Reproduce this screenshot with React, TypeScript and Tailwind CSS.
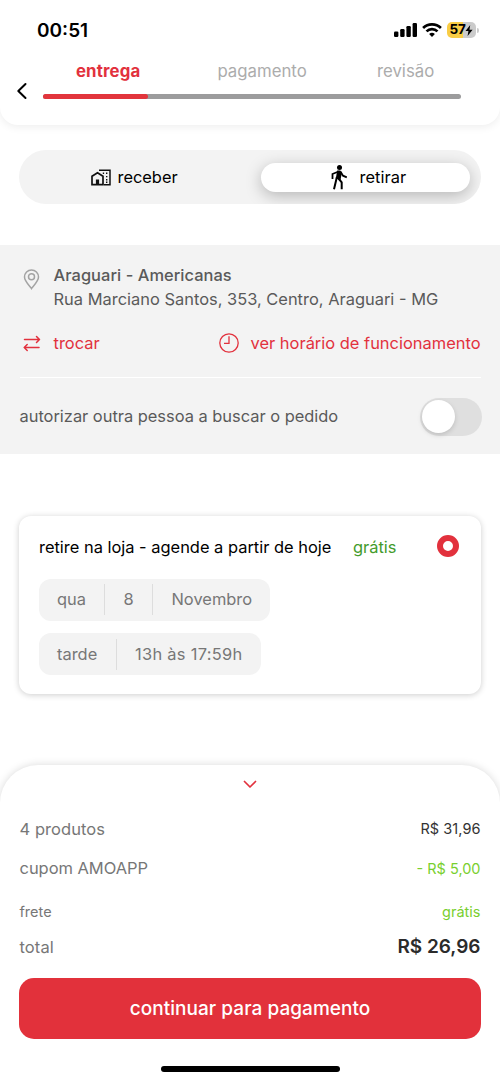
function StatusBar() {
  return (
    <div className="flex h-14 items-center justify-between pt-1 pr-[21px] pl-[37px]">
      <span className="pt-0.5 text-[19px] font-semibold text-black">00:51</span>
      <div className="flex items-center">
        <svg width="23" height="14" viewBox="0 0 23 14" fill="#000">
          <rect x="0" y="8.5" width="4.4" height="5.5" rx="1.2" />
          <rect x="6.2" y="6" width="4.4" height="8" rx="1.2" />
          <rect x="12.4" y="3" width="4.4" height="11" rx="1.2" />
          <rect x="18.6" y="0" width="4.4" height="14" rx="1.2" />
        </svg>
        <svg className="ml-[5px]" width="20" height="14" viewBox="0 0 20 14" fill="none" stroke="#000" strokeWidth="2.7">
          <path d="M1.1 5A12.7 12.7 0 0 1 18.9 5" />
          <path d="M4.5 8.4A7.9 7.9 0 0 1 15.5 8.4" />
          <path d="M10 14 7.1 11.1A4.2 4.2 0 0 1 12.9 11.1Z" fill="#000" stroke="none" />
        </svg>
        <div className="ml-[5px] flex h-4 w-[29px] items-center justify-center rounded-[5px] bg-[linear-gradient(90deg,#f9cd45_56%,#cbcbcb_56%)]">
          <span className="text-[13.5px] leading-none font-bold tracking-[-0.3px] text-black">57</span>
          <svg width="8" height="11" viewBox="0 0 8 11" fill="#000">
            <path d="M5.2 0 .5 6h2.9L2.6 11l5-6.3H4.5Z" />
          </svg>
        </div>
        <div className="ml-px h-[5px] w-[2px] rounded-r-full bg-[#cbcbcb]" />
      </div>
    </div>
  );
}

function Steps() {
  return (
    <div className="flex h-[68px] pt-[3px] pl-4">
      <svg className="mt-[23px]" width="12" height="18" viewBox="0 0 12 18" fill="none" stroke="#000" strokeWidth="2" strokeLinecap="round" strokeLinejoin="round">
        <path d="M9.5 2 2.3 9l7.2 7" />
      </svg>
      <div className="ml-[15.4px] w-[418px]">
        <div className="flex h-[26px] items-center text-[16.8px] text-[#acacac]">
          <span className="ml-[32.5px] w-[141.5px] font-bold tracking-[0.15px] text-[#e2313d]">entrega</span>
          <span className="w-[159.5px]">pagamento</span>
          <span>revisão</span>
        </div>
        <div className="mt-[9px] h-[5px] rounded-full bg-[#9c9c9d]">
          <div className="h-full w-[105px] rounded-full bg-[#e2353c]" />
        </div>
      </div>
    </div>
  );
}

function HomeIcon() {
  return (
    <svg width="20" height="17" viewBox="0 0 20 17" fill="none" stroke="#111">
      <path d="M1 15.7V7.300L6.500 3.700l5.500 3.600v8.400Z" strokeWidth="1.700" />
      <path d="M8 1.200h11v14.500h-6" strokeWidth="1.500" />
      <path d="M4.900 16V10.500h3.200V16Z" fill="#111" stroke="none" />
      <path d="M11.800 4.300h1.300M15 4.300h1.400M15 7.600h1.400M15 10.700h1.400M15 13.300h1.400" strokeWidth="1.400" />
    </svg>
  );
}

function WalkIcon() {
  return (
    <svg width="17" height="25" viewBox="0 0 17 25" fill="none" stroke="#000" strokeWidth="1.800">
      <circle cx="8.500" cy="2.500" r="2.500" fill="#000" stroke="none" />
      <path d="M6.200 5.500h3l1.800 1.800-1.500 7.700-4.700-1.500Z" fill="#000" stroke="none" />
      <path d="M7.500 6.500 1.500 9v5M9.700 7l2.300 3.700 3.800 1.600" />
      <path d="M5.900 12 3 24.300M7.500 13.500l3.200 3.800v7" strokeWidth="2" />
    </svg>
  );
}

function DeliveryTabs() {
  return (
    <div className="mx-[19px] mt-[25px] flex h-[54px] items-center overflow-hidden rounded-full bg-[#f3f3f3] text-[16.4px] text-black">
      <button className="flex h-full w-[242px] items-center pl-[71.5px]">
        <HomeIcon />
        <span className="ml-[7px]">receber</span>
      </button>
      <button className="flex h-[29px] w-[209px] items-center rounded-full bg-white pl-[70px] shadow-[0_4px_16px_rgba(0,0,0,0.25)]">
        <WalkIcon />
        <span className="ml-[11.5px] tracking-[0.05px]">retirar</span>
      </button>
    </div>
  );
}

function Store() {
  return (
    <section className="mt-[41px] h-[209px] bg-[#f3f3f3] px-[19.5px] pt-[18px] text-[16.45px] text-[#5a5a5a]">
      <div className="flex">
        <svg className="mt-[6px] ml-[3.5px]" width="17" height="21" viewBox="0 0 17 21" fill="none" stroke="#a3a3a3" strokeWidth="1.5">
          <path d="M8.5 19.5C7.5 17.6 1.5 12.5 1.5 8a7 7 0 0 1 14 0c0 4.500-6 9.600-7 11.500Z" />
          <circle cx="8.500" cy="7.700" r="3" />
        </svg>
        <div className="ml-[13.5px] leading-6">
          <p className="font-medium tracking-[0.04px]">Araguari - Americanas</p>
          <p>Rua Marciano Santos, 353, Centro, Araguari - MG</p>
        </div>
      </div>
      <div className="mt-5 flex h-6 items-center text-[#e2313d]">
        <svg className="ml-[3px]" width="18" height="17" viewBox="0 0 18 17" fill="none" stroke="#e2313d" strokeWidth="1.5" strokeLinecap="round" strokeLinejoin="round">
          <path d="M1.500 4.500h15M13.500 1.500l3 3-3 3M16 12.500H1.200M4.200 9.500l-3 3 3 3" />
        </svg>
        <span className="ml-[13px]">trocar</span>
        <svg className="ml-auto" width="20" height="20" viewBox="0 0 20 20" fill="none" stroke="#e2313d" strokeWidth="1.300">
          <circle cx="10" cy="10" r="9.200" />
          <path d="M10 3.300v7H5" />
        </svg>
        <span className="ml-[12px]">ver horário de funcionamento</span>
      </div>
      <div className="mt-[22px] h-px bg-white" />
      <div className="-mr-[1.5px] flex h-[77px] items-center justify-between">
        <span className="tracking-[-0.02px]">autorizar outra pessoa a buscar o pedido</span>
        <div className="flex h-[38px] w-[62px] items-center rounded-full bg-[#dfdfdf] px-[2px]">
          <div className="h-[33px] w-[33px] rounded-full bg-white shadow-[0_2px_5px_rgba(0,0,0,0.15)]" />
        </div>
      </div>
    </section>
  );
}

function PickupCard() {
  return (
    <section className="mx-[19px] mt-[62px] h-[178px] rounded-[12px] bg-white px-5 pt-[18px] text-[16.43px] text-[#777] shadow-[0_1px_6px_rgba(0,0,0,0.2)]">
      <div className="flex h-[26px] items-center">
        <span className="w-[314px] text-black">retire na loja - agende a partir de hoje</span>
        <span className="text-[#439b2c]">grátis</span>
        <span className="mr-[2px] mb-[3px] ml-auto h-[22px] w-[22px] rounded-full border-[6px] border-[#e2313d]" />
      </div>
      <div className="mt-[18.5px] flex h-[42px] w-[231px] items-center rounded-[12px] bg-[#f3f3f3] pl-[18px]">
        <span className="w-[47px]">qua</span>
        <div className="h-[31px] w-px bg-[#ddd]" />
        <span className="w-[47px] text-center">8</span>
        <div className="h-[31px] w-px bg-[#ddd]" />
        <span className="ml-[18.5px]">Novembro</span>
      </div>
      <div className="mt-[12.5px] flex h-[42px] w-[222px] items-center rounded-[12px] bg-[#f3f3f3] pl-[18px]">
        <span className="w-[59px]">tarde</span>
        <div className="h-[31px] w-px bg-[#ddd]" />
        <span className="ml-[18px] tracking-[0.3px]">13h às 17:59h</span>
      </div>
    </section>
  );
}

function Summary() {
  return (
    <section className="mt-[71px] flex h-[317px] flex-col rounded-t-[38px] bg-white px-[19.5px] text-[16.5px] text-[#777] shadow-[0_0_8px_rgba(0,0,0,0.15)]">
      <svg className="mx-auto mt-[15px]" width="14" height="9" viewBox="0 0 14 9" fill="none" stroke="#e2313d" strokeWidth="1.700" strokeLinecap="round" strokeLinejoin="round">
        <path d="m1.500 1.500 5.500 5.500 5.500-5.500" />
      </svg>
      <div className="mt-[20px] flex h-10 items-center justify-between">
        <span className="tracking-[0.05px]">4 produtos</span>
        <span className="text-[14.500px] tracking-[0.05px] text-[#333]">R$ 31,96</span>
      </div>
      <div className="flex h-10 items-center justify-between">
        <span className="-mt-px tracking-[-0.05px]">cupom AMOAPP</span>
        <span className="text-[14.500px] text-[#79cf2f]">- R$ 5,00</span>
      </div>
      <div className="flex h-[45px] items-center justify-between text-[14.500px]">
        <span>frete</span>
        <span className="text-[#79cf2f]">grátis</span>
      </div>
      <div className="flex h-[27px] items-center justify-between">
        <span className="tracking-[0.1px]">total</span>
        <span className="pb-px text-[19px] font-semibold text-[#2b2b2b]">R$ 26,96</span>
      </div>
      <button className="-mx-[0.5px] mt-[17px] h-[60.5px] rounded-[15px] bg-[#e2313b] pt-px text-[19px] font-medium tracking-[0.05px] text-white">
        continuar para pagamento
      </button>
      <div className="mx-auto mt-[27.5px] h-[6px] w-[179px] rounded-full bg-black" />
    </section>
  );
}

export default function App() {
  return (
    <main className="h-[1082px] w-[500px] overflow-hidden bg-white font-['Inter',sans-serif]">
      <header className="h-[125px] rounded-b-[18px] bg-white shadow-[0_2px_8px_rgba(0,0,0,0.07)]">
        <StatusBar />
        <Steps />
      </header>
      <DeliveryTabs />
      <Store />
      <PickupCard />
      <Summary />
    </main>
  );
}
